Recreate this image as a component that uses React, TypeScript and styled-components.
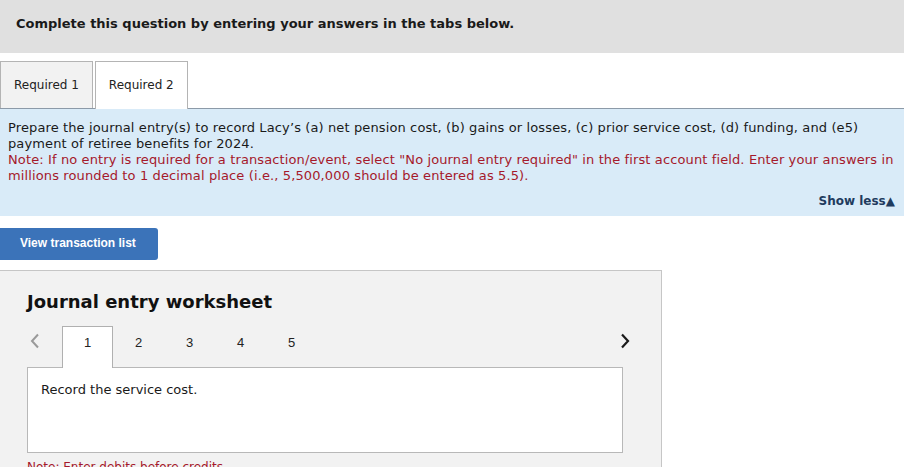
import React from "react";
import styled, { createGlobalStyle } from "styled-components";

const GlobalStyle = createGlobalStyle`
  html, body {
    margin: 0;
    padding: 0;
    background: #ffffff;
    font-family: "DejaVu Sans", Verdana, sans-serif;
    color: #1a1a1a;
  }
`;

const Page = styled.div`
  width: 904px;
  height: 467px;
  overflow: hidden;
`;

const Banner = styled.div`
  height: 53px;
  background: #e0e0e0;
  display: flex;
  align-items: center;
  padding: 0 16px 6px 16px;
  font-size: 13px;
  font-weight: bold;
  color: #1a1a1a;
  box-sizing: border-box;
`;

const TabBar = styled.div`
  display: flex;
  gap: 2px;
  margin-top: 8px;
  border-bottom: 1px solid #8c9aa8;
`;

const Tab = styled.div<{ $active?: boolean }>`
  padding: 0 13px 1px 13px;
  display: flex;
  align-items: center;
  font-size: 12px;
  color: #222;
  border: 1px solid #b4b4b4;
  border-bottom: none;
  background: ${(p) => (p.$active ? "#ffffff" : "#f2f2f2")};
  margin-bottom: ${(p) => (p.$active ? "-1px" : "0")};
  height: ${(p) => (p.$active ? "48px" : "47px")};
  box-sizing: border-box;
`;

const InfoPanel = styled.div`
  background: #d9ebf8;
  padding: 11px 8px 8px 8px;
  font-size: 13px;
  line-height: 16px;
  letter-spacing: 0.12px;
  height: 107px;
  box-sizing: border-box;
  display: flex;
  flex-direction: column;
`;

const Instruction = styled.div`
  color: #1a1a1a;
`;

const Note = styled.div`
  color: #a5192b;
`;

const ShowLess = styled.div`
  margin-top: auto;
  align-self: flex-end;
  font-weight: bold;
  font-size: 12px;
  letter-spacing: 0;
  color: #1f3b5e;
  padding-right: 1px;
  margin-bottom: -1px;
`;

const ActionButton = styled.button`
  display: block;
  margin-top: 12px;
  width: 158px;
  height: 32px;
  border: none;
  border-radius: 0 3px 3px 0;
  background: #3b73b9;
  color: #ffffff;
  font-family: "Liberation Sans", Arial, sans-serif;
  font-weight: bold;
  font-size: 12px;
  text-align: left;
  padding: 0 0 2px 20px;
`;

const Worksheet = styled.div`
  margin-top: 10px;
  width: 662px;
  height: 210px;
  background: #f2f2f2;
  border: 1px solid #c6c6c6;
  border-left: none;
  box-sizing: border-box;
  padding: 20px 38px 0 27px;
`;

const Title = styled.h2`
  margin: 0;
  font-size: 18px;
  font-weight: bold;
  color: #111;
  line-height: 22px;
`;

const NavRow = styled.div`
  display: flex;
  align-items: flex-end;
  margin: 13px -7px 0 0;
  height: 41px;
`;

const Arrow = styled.span<{ $dim?: boolean }>`
  width: 35px;
  height: 41px;
  display: flex;
  align-items: flex-start;
  padding-top: 7px;
  box-sizing: border-box;
  justify-content: ${(p) => (p.$dim ? "flex-start" : "flex-end")};
  padding-left: ${(p) => (p.$dim ? "3px" : "0")};
  color: ${(p) => (p.$dim ? "#9a9a9a" : "#1a1a1a")};
`;

const Steps = styled.div`
  display: flex;
  flex: 1;
  align-items: flex-end;
`;

const Step = styled.div<{ $active?: boolean }>`
  width: 51px;
  height: 42px;
  display: flex;
  align-items: flex-start;
  justify-content: center;
  padding-top: 8px;
  font-family: "Liberation Sans", Arial, sans-serif;
  font-size: 13px;
  color: #222;
  box-sizing: border-box;
  background: ${(p) => (p.$active ? "#ffffff" : "transparent")};
  border: 1px solid ${(p) => (p.$active ? "#b0b0b0" : "transparent")};
  border-bottom: none;
  margin-bottom: -1px;
  position: relative;
  z-index: 1;
`;

const EntryBox = styled.div`
  height: 86px;
  background: #ffffff;
  border: 1px solid #b8b8b8;
  box-sizing: border-box;
  padding: 14px 13px;
  font-size: 13px;
  color: #1a1a1a;
`;

const Footnote = styled.div`
  margin-top: 7px;
  font-size: 12px;
  color: #a5192b;
`;

const Chevron = ({ dir }: { dir: "left" | "right" }) => (
  <svg width="10" height="16" viewBox="0 0 10 16">
    <path
      d={dir === "left" ? "M8 1.5 L2 8 L8 14.5" : "M2 1.5 L8 8 L2 14.5"}
      fill="none"
      stroke="currentColor"
      strokeWidth={dir === "left" ? 2 : 2.2}
    />
  </svg>
);

export default function App() {
  return (
    <Page>
      <GlobalStyle />
      <Banner>Complete this question by entering your answers in the tabs below.</Banner>
      <TabBar>
        <Tab>Required 1</Tab>
        <Tab $active>Required 2</Tab>
      </TabBar>
      <InfoPanel>
        <Instruction>
          Prepare the journal entry(s) to record Lacy’s (a) net pension cost, (b) gains or losses, (c) prior service cost, (d) funding, and (e5) payment of retiree benefits for 2024.
        </Instruction>
        <Note>
          Note: If no entry is required for a transaction/event, select "No journal entry required" in the first account field. Enter your answers in millions rounded to 1 decimal place (i.e., 5,500,000 should be entered as 5.5).
        </Note>
        <ShowLess>Show less▲</ShowLess>
      </InfoPanel>
      <ActionButton>View transaction list</ActionButton>
      <Worksheet>
        <Title>Journal entry worksheet</Title>
        <NavRow>
          <Arrow $dim>
            <Chevron dir="left" />
          </Arrow>
          <Steps>
            {[1, 2, 3, 4, 5].map((n) => (
              <Step key={n} $active={n === 1}>
                {n}
              </Step>
            ))}
          </Steps>
          <Arrow>
            <Chevron dir="right" />
          </Arrow>
        </NavRow>
        <EntryBox>Record the service cost.</EntryBox>
        <Footnote>Note: Enter debits before credits.</Footnote>
      </Worksheet>
    </Page>
  );
}
